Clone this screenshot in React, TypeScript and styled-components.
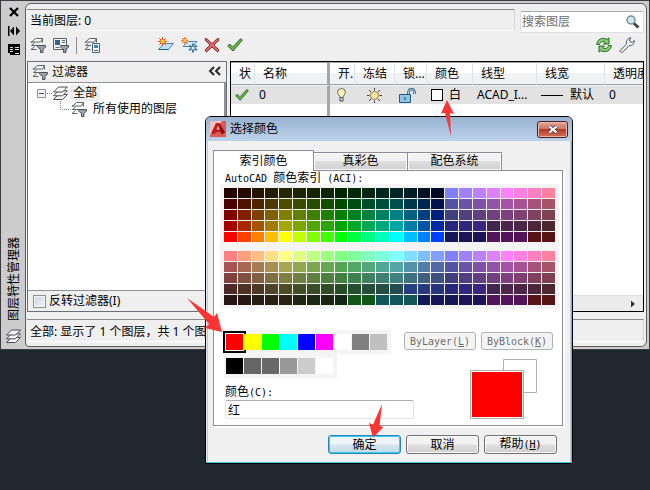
import React from "react";
import styled, { createGlobalStyle, css } from "styled-components";

const GlobalStyle = createGlobalStyle`
  * { box-sizing: border-box; }
  html, body { margin: 0; background: #20272f; }
  body {
    font-family: "Noto Sans", "Noto Sans CJK SC", sans-serif;
    font-size: 12px;
    line-height: 16px;
    color: #000;
    overflow: hidden;
  }
  button, input { font: inherit; color: inherit; margin: 0; padding: 0; }
`;

/* ---------- palette window ---------- */

const Desktop = styled.div`
  position: relative;
  min-height: 100vh;
`;

const Palette = styled.section`
  display: flex;
  padding: 2px 2px 2px 1px;
  background: #ccc;
  border: 1px solid #3c3b40;
`;

const SideBar = styled.div`
  width: 23px;
  flex: none;
  display: flex;
  flex-direction: column;
  align-items: center;
  gap: 7px;
  padding: 3px 0 0;
`;

const SideButton = styled.button`
  display: block;
  width: 14px;
  height: 12px;
  border: 0;
  background: none;
  svg { display: block; }
`;

const SideTitle = styled.h1`
  margin: auto 0 1px;
  font-size: 12px;
  font-weight: 400;
  line-height: 16px;
  writing-mode: vertical-rl;
  text-orientation: sideways;
  transform: rotate(180deg);
`;

const SideFoot = styled.span`
  display: block;
  height: 18px;
  svg { display: block; }
`;

const Client = styled.div`
  flex: 1;
  min-width: 0;
  display: flex;
  flex-direction: column;
  padding: 5px 2px 4px 1px;
  background: #efefef;
  border: 1px solid #5c5c60;
  border-radius: 6px 6px 6px 4px;
`;

const TopRow = styled.div`
  display: flex;
  align-items: flex-start;
  gap: 5px;
`;

const CurrentLayer = styled.div`
  flex: 1;
  height: 22px;
  padding: 3px 3px;
  border-top: 1px solid #8a8a8a;
  border-right: 1px solid #d4d4d4;
  border-bottom: 1px solid #fafafa;
`;

const SearchBox = styled.label`
  display: flex;
  align-items: center;
  width: 124px;
  height: 22px;
  margin-top: 2px;
  padding: 0 3px 0 1px;
  background: #fff;
  border: 1px solid #dcdfe4;
  border-top-color: #a8abb0;
  border-radius: 2px;
  input {
    flex: 1;
    min-width: 0;
    border: 0;
    outline: 0;
    background: none;
  }
  input::placeholder { color: #6d6d6d; opacity: 1; }
`;

const ToolBar = styled.div`
  display: flex;
  align-items: center;
  gap: 7px;
  height: 28px;
  padding: 0 9px 4px 3px;
`;

const ToolButton = styled.button`
  display: block;
  width: 16px;
  height: 16px;
  border: 0;
  background: none;
  svg { display: block; }
`;

const Separator = styled.span`
  width: 1px;
  height: 17px;
  background: #8c8c8c;
`;

const ToolGroup = styled.div<{ $push?: number; $end?: boolean }>`
  display: flex;
  align-items: center;
  gap: 7px;
  margin-left: ${(p) => (p.$end ? "auto" : `${p.$push ?? 0}px`)};
`;

const Panes = styled.div`
  display: grid;
  grid-template-columns: 200px 1fr;
  gap: 3px;
  height: 251px;
`;

const FilterPane = styled.div`
  display: flex;
  flex-direction: column;
  border: 1px solid #6c6f76;
  min-height: 0;
`;

const FilterHeader = styled.div`
  display: flex;
  align-items: center;
  gap: 4px;
  height: 21px;
  padding: 0 4px;
  border-bottom: 1px solid #8d9099;
  button { margin-left: auto; }
`;

const Tree = styled.ul`
  flex: 1;
  margin: 0;
  padding: 2px 8px;
  list-style: none;
  background: #fff;
  border-right: 2px solid #8d9099;
`;

const TreeItem = styled.li<{ $level: number }>`
  display: flex;
  align-items: center;
  height: 16px;
  padding-left: ${(p) => p.$level * 24}px;
  svg { flex: none; }
`;

const TreeLabel = styled.span<{ $selected?: boolean }>`
  padding: 0 3px;
  background: ${(p) => (p.$selected ? "#eee" : "transparent")};
`;

const InvertRow = styled.label`
  display: flex;
  align-items: center;
  gap: 3px;
  height: 21px;
  padding: 0 5px;
  border-top: 1px solid #8d9099;
  input {
    appearance: none;
    width: 13px;
    height: 13px;
    border: 1px solid #8e8f8f;
    background: linear-gradient(135deg, #cfd2d6, #f6f6f6);
    box-shadow: inset 0 0 0 1px #f4f4f4;
  }
`;

const ListPane = styled.div`
  display: flex;
  flex-direction: column;
  min-width: 0;
  overflow: hidden;
  border: 1px solid #000;
  background: #fff;
`;

const LayerTable = styled.table`
  table-layout: fixed;
  width: 100%;
  border-collapse: separate;
  border-spacing: 0;
  white-space: nowrap;
  th {
    height: 23px;
    padding: 0 0 0 8px;
    overflow: hidden;
    font-weight: 400;
    text-align: left;
    background: linear-gradient(#fff 50%, #f1f2f4 50%);
    border-right: 1px solid #dfe2e6;
    border-bottom: 1px solid #a0a0a0;
    border-top: 1px solid #a0a0a0;
  }
  td {
    height: 19px;
    padding: 0 0 0 4px;
    overflow: hidden;
    background: #e2e2e2;
    border-top: 1px solid #f2f2f2;
  }
  th:nth-child(2), td:nth-child(2) { border-right: 3px solid #a6a6a6; }
  th:last-child { border-right: 0; }
  svg { display: block; }
`;

const Cell = styled.span<{ $gap?: number }>`
  display: flex;
  align-items: center;
  gap: ${(p) => p.$gap ?? 7}px;
`;

const Center = styled.span`
  display: flex;
  justify-content: center;
  padding-right: 6px;
`;

const ColorChip = styled.span`
  width: 12px;
  height: 12px;
  border: 1px solid #000;
  background: #fff;
`;

const Dash = styled.span`
  width: 22px;
  height: 1px;
  background: #000;
`;

const ListBody = styled.div`
  flex: 1;
  display: flex;
`;

const ListDivider = styled.div`
  width: 99px;
  border-right: 3px solid #a6a6a6;
`;

const ScrollBar = styled.div`
  display: flex;
  justify-content: flex-end;
  align-items: center;
  height: 16px;
  padding-right: 6px;
  background: #ececec;
  border-top: 1px solid #ddd;
  button { height: 10px; width: 8px; border: 0; background: none; }
  svg { display: block; }
`;

const StatusBar = styled.div`
  margin-top: 7px;
  height: 23px;
  padding: 4px 3px;
  border-top: 1px solid #8a8a8a;
  border-right: 1px solid #d4d4d4;
  border-bottom: 1px solid #fff;
`;

/* ---------- colour dialog ---------- */

const Dialog = styled.section`
  position: absolute;
  left: 205px;
  top: 116px;
  width: 368px;
  background: #f0f0f0;
  border: 1px solid #000;
  border-radius: 6px 6px 0 0;
  box-shadow: inset -1px -1px 0 #45c4ee, inset 1px 1px 0 #dfe9f4, inset -2px 0 0 #b7cfe6, inset 2px 0 0 #b9cbe0;
  font-family: "DejaVu Sans Mono", "Noto Sans CJK SC", monospace;
`;

const TitleBar = styled.header`
  display: flex;
  align-items: center;
  height: 24px;
  padding: 0 4px;
  background: linear-gradient(#98b3d0, #bdd2ea);
  border-radius: 5px 5px 0 0;
  h2 {
    flex: 1;
    margin: 0 0 0 4px;
    font-size: 12px;
    font-weight: 400;
  }
`;

const CloseButton = styled.button`
  display: flex;
  align-items: center;
  justify-content: center;
  width: 31px;
  height: 17px;
  border: 1px solid #4c1d25;
  border-radius: 3px;
  background: linear-gradient(#e0a99b, #cf7567 45%, #b53a26 50%, #d2715a);
  box-shadow: inset 0 0 0 1px #e8b9ad;
`;

const Content = styled.div`
  padding: 9px 9px 9px 7px;
`;

const Tabs = styled.div`
  display: flex;
  align-items: flex-end;
`;

const tabOn = css`
  width: 101px;
  height: 21px;
  margin-bottom: -1px;
  background: #fff;
`;
const tabOff = css`
  width: 95px;
  height: 18px;
  margin-left: -1px;
  background: linear-gradient(#f2f2f2 45%, #dedede 50%, #d0d0d0);
  box-shadow: inset 0 0 0 1px #fbfbfb;
`;
const Tab = styled.button<{ $active?: boolean }>`
  border: 1px solid #8d8c98;
  border-bottom: 0;
  line-height: 17px;
  ${(p) => (p.$active ? tabOn : tabOff)}
`;

const TabPanel = styled.div`
  padding: 0 3px 5px 6px;
  background: #fff;
  border: 1px solid #8d8c98;
  box-shadow: 2px 2px 0 #fff;
`;

const Caption = styled.div`
  padding-left: 5px;
  height: 13px;
  line-height: 15px;
`;

const Latin = styled.span`
  font-size: 10px;
`;

const IndexBoard = styled.div`
  display: grid;
  gap: 9px;
  padding: 4px;
  background: #f4f4f4;
`;

const IndexGrid = styled.div`
  display: grid;
  grid-template-columns: repeat(24, 1fr);
  grid-auto-rows: 10px;
  gap: 1px;
`;

const Swatch = styled.button<{ $color: string }>`
  border: 0;
  min-width: 0;
  background: ${(p) => p.$color};
`;

const Standard = styled.div`
  display: flex;
  justify-content: space-between;
  align-items: flex-start;
  padding: 21px 6px 0 4px;
`;

const StandardRow = styled.div`
  display: flex;
  gap: 1px;
  width: max-content;
  padding: 4px 4px 4px 2px;
  background: #f4f4f4;
`;

const StandardSwatch = styled(Swatch)<{ $picked?: boolean }>`
  width: 17px;
  height: 16px;
  ${(p) => p.$picked && css`box-shadow: 0 0 0 1px #fff, 0 0 0 3px #000;`}
`;

const ByButtons = styled.div`
  display: flex;
  gap: 5px;
  padding-top: 2px;
`;

const ByButton = styled.button`
  width: 72px;
  height: 18px;
  font-size: 10px;
  line-height: 15px;
  color: #6d6d6d;
  background: #f4f4f4;
  border: 1px solid #adb2b5;
  border-radius: 3px;
`;

const LowerRow = styled.div`
  display: flex;
  justify-content: space-between;
  align-items: flex-start;
  padding: 0 22px 0 5px;
`;

const NameField = styled.label`
  display: block;
  width: 189px;
  padding-top: 7px;
  line-height: 14px;
  input {
    display: block;
    width: 100%;
    height: 19px;
    padding: 0 2px;
    background: #fff;
    border: 1px solid #e2e3ea;
    border-top-color: #abadb3;
    border-radius: 2px;
    outline: 0;
  }
`;

const Preview = styled.svg`
  display: block;
  margin-top: -19px;
`;

const Actions = styled.div`
  display: flex;
  justify-content: flex-end;
  gap: 5px;
  padding: 9px 6px 0 0;
`;

const ActionButton = styled.button<{ $primary?: boolean }>`
  width: 73px;
  height: 19px;
  line-height: 16px;
  border: 1px solid ${(p) => (p.$primary ? "#2c84b4" : "#707070")};
  border-radius: 3px;
  background: ${(p) =>
    p.$primary
      ? "linear-gradient(#edf5f9 48%, #d5e6ee 52%, #c3d9e4)"
      : "linear-gradient(#f2f2f2 48%, #dedede 52%, #cfcfcf)"};
  box-shadow: inset 0 0 0 1px ${(p) => (p.$primary ? "#33ccf4" : "#fbfbfb")};
`;

const Pointer = styled.svg<{ $x: number; $y: number }>`
  position: absolute;
  left: ${(p) => p.$x}px;
  top: ${(p) => p.$y}px;
  pointer-events: none;
  fill: #fc3434;
`;

/* ---------- icons ---------- */

const LayersIcon = () => (
  <svg width="18" height="15" viewBox="0 0 18 15" fill="#f5f5f5" stroke="#4a4e54" aria-hidden="true">
    <path d="M1.5 13.500l5-5h9l-5 5z" />
    <path d="M1.500 9.800l5-5h9l-5 5z" />
    <path d="M1.500 6l5-5h9l-5 5z" />
  </svg>
);

const Funnel = () => (
  <path d="M7.500 8.500h8v1.500l-2.500 2.500v3h-2.500v-3L7.500 10z" fill="#98a2ad" stroke="#4b535d" />
);

const SheetLines = () => (
  <g fill="none" stroke="#5d6268">
    <path d="M1 5.500l4.500-4h7l-2 3.500H1z" fill="#fafafa" />
    <path d="M7 8.500H1.500l3-2.500M6.500 12.500H1l3.500-3" />
    <path d="M12.500 1.500v4" />
  </g>
);

const FilterIcon = () => (
  <svg width="16" height="16" viewBox="0 0 16 16" aria-hidden="true">
    <SheetLines />
    <Funnel />
  </svg>
);

const GroupFilterIcon = () => (
  <svg width="16" height="16" viewBox="0 0 16 16" aria-hidden="true">
    <path d="M.5 1.500h13v11H.5z" fill="#f3f6f8" stroke="#55626e" />
    <path d="M2 3h5v5H2z" fill="#35618c" />
    <path d="M9 3.500h3M9 5.500h3M2.500 10.500h4" stroke="#55626e" />
    <Funnel />
  </svg>
);

const StatesIcon = () => (
  <svg width="16" height="16" viewBox="0 0 16 16" aria-hidden="true">
    <SheetLines />
    <path d="M8.500 6.500h7v9h-7z" fill="#f6fbff" stroke="#4b5f72" />
    <path d="M10 8h4v3h-4z" fill="#3d7fb4" />
    <path d="M10 13.500h4" stroke="#4b5f72" />
  </svg>
);

const Burst = () => (
  <g>
    <path d="M4.500 0v9M0 4.500h9M1.300 1.300l6.400 6.400M7.700 1.300L1.300 7.700" stroke="#d9461c" />
    <circle cx="4.500" cy="4.500" r="2.200" fill="#ffd23c" stroke="#e87a18" />
  </g>
);

const NewLayerIcon = () => (
  <svg width="16" height="16" viewBox="0 0 16 16" aria-hidden="true">
    <path d="M.5 12.500L6 6.500h9.500l-5 6z" fill="#bfe0f2" stroke="#4f83a3" />
    <path d="M1 12.500h9.500" stroke="#1f5d86" />
    <Burst />
  </svg>
);

const NewFrozenIcon = () => (
  <svg width="17" height="16" viewBox="0 0 17 16" aria-hidden="true">
    <path d="M2 9.500L7 4.500h9l-4 5z" fill="#d4eaf6" stroke="#4f83a3" />
    <g transform="scale(.8)"><Burst /></g>
    <path d="M12 6.500v9M8 8.700l8 4.500M16 8.700l-8 4.500" stroke="#3f78ab" strokeWidth="2" />
    <circle cx="12" cy="11" r="1.500" fill="#e8f5ff" />
  </svg>
);

const DeleteIcon = () => (
  <svg width="16" height="16" viewBox="0 0 16 16" aria-hidden="true">
    <path d="M2 1L8 6.500 14 1l1 2-5.200 5.200L15 13l-1.500 2L8 10l-5.500 5L1 13l5-5L1 3z" fill="#e06a6a" stroke="#802a30" />
  </svg>
);

const CheckIcon = () => (
  <svg width="16" height="14" viewBox="0 0 16 14" aria-hidden="true">
    <path d="M.7 8l2-2 3 3.200L13.500.8 15.300 2 6 13z" fill="#6fb54a" stroke="#226a1c" />
  </svg>
);

const RefreshIcon = () => (
  <svg width="16" height="16" viewBox="0 0 16 16" aria-hidden="true">
    <g fill="#8ecb76" stroke="#236d20">
      <path d="M.7 7.500C.8 3 6-.6 11 2.500L13 .8V7H7.500L9.300 5C6.500 3.600 4 5 3.500 7.500z" />
      <path d="M15.300 8.500C15.200 13 10 16.600 5 13.500l-2 1.700V9h5.500l-1.800 2c2.800 1.400 5.300 0 5.800-2.500z" />
    </g>
  </svg>
);

const WrenchIcon = () => (
  <svg width="16" height="16" viewBox="0 0 16 16" aria-hidden="true">
    <path d="M1 13.500l6.500-6.300C6.800 3.500 9 1 12 .8L10.600 3l.6 1.800 2 .5L15.300 3.500c.4 3-2 5.500-5.200 5.200L3.500 15.300c-1.200.7-3-.6-2.500-1.800z" fill="#eceef0" stroke="#50545a" />
  </svg>
);

const SearchIcon = () => (
  <svg width="14" height="14" viewBox="0 0 14 14" aria-hidden="true">
    <path d="M7.500 8l5 4.500" stroke="#3c444c" strokeWidth="3" />
    <circle cx="5" cy="5" r="4" fill="#cfe6ee" stroke="#7c8b96" strokeWidth="1.500" />
  </svg>
);

const BulbIcon = () => (
  <svg width="9" height="15" viewBox="0 0 9 15" aria-hidden="true">
    <path d="M3 9.500C3 7.500.6 6.500.6 4.200a3.900 3.700 0 0 1 7.800 0C8.400 6.500 6 7.500 6 9.500z" fill="#fdf6b8" stroke="#6b6a5a" />
    <path d="M3 9.500h3V13H3z" fill="#ddd" stroke="#4a4a4a" />
  </svg>
);

const SunIcon = () => (
  <svg width="15" height="15" viewBox="0 0 15 15" aria-hidden="true">
    <path d="M7.500 0v2.500M7.500 12.500V15M0 7.500h2.500M12.500 7.500H15M2 2l2 2M11 11l2 2M13 2l-2 2M4 11l-2 2" stroke="#3f3f3f" />
    <circle cx="7.500" cy="7.500" r="4" fill="#fbe8a0" stroke="#8f7a3c" />
  </svg>
);

const LockIcon = () => (
  <svg width="17" height="15" viewBox="0 0 17 15" aria-hidden="true">
    <path d="M9.500 7V4a3 3 0 0 1 6 0v2" fill="none" stroke="#2c5878" strokeWidth="2.500" />
    <path d="M9.500 7V4a3 3 0 0 1 6 0v2" fill="none" stroke="#a9d5ee" />
    <path d="M.5 6.500h11v8H.5z" fill="#8fc6e6" stroke="#255a80" />
    <path d="M6 9v3" stroke="#17354c" />
  </svg>
);

const AppLogo = () => (
  <svg width="16" height="16" viewBox="0 0 16 16" aria-hidden="true">
    <path d="M0 0h16v16H0z" fill="#dd5a54" />
    <path d="M0 0h12L0 14z" fill="#f3c4bf" />
    <path d="M1 12.500L6 2h3.500l2 9H6.500l-2 2z" fill="#c01a20" />
    <path d="M6.500 8.500L8 5l1.500 3.500z" fill="#f5c6c2" />
    <path d="M9.500 2l5.500 9.500-3.500 2z" fill="#7d0a12" />
  </svg>
);

const Expander = () => (
  <svg width="16" height="16" viewBox="0 0 16 16" aria-hidden="true">
    <path d="M1.500 4.500h8v8h-8z" fill="#f4f4f4" stroke="#919191" />
    <path d="M3 8.500h5" stroke="#2f55a4" />
    <path d="M11 8.500h5" stroke="#777" strokeDasharray="1 1" />
  </svg>
);

const Branch = () => (
  <svg width="11" height="16" viewBox="0 0 11 16" aria-hidden="true">
    <path d="M.5 0v8.500h10" fill="none" stroke="#777" strokeDasharray="1 1" />
  </svg>
);

/* ---------- data ---------- */

const COLUMNS: { label: string; width?: number }[] = [
  { label: "状", width: 24 },
  { label: "名称", width: 75 },
  { label: "开.", width: 25 },
  { label: "冻结", width: 40 },
  { label: "锁...", width: 32 },
  { label: "颜色", width: 46 },
  { label: "线型", width: 64 },
  { label: "线宽", width: 68 },
  { label: "透明度" },
];

const LEVELS = [1, 0.65, 0.5, 0.3, 0.15];

function hueColor(index: number, level: number, pastel: boolean): string {
  const step = index / 4;
  const channel = (n: number) => {
    const k = (n + step) % 6;
    const full = 1 - Math.max(0, Math.min(k, 4 - k, 1));
    const value = pastel ? 0.5 + full / 2 : full;
    return Math.round(value * level * 255);
  };
  return `rgb(${channel(5)}, ${channel(3)}, ${channel(1)})`;
}

const DIM: Record<number, string> = {
  13: "#26407f", 14: "#263a80", 15: "#26337f", 16: "#26267f", 17: "#2f267f", 18: "#3a267f",
};

function pastelColor(index: number, row: number): string {
  if (row === 3 && DIM[index]) return DIM[index];
  if (row === 4) {
    if (index >= 22) return "#581316";
    if (index >= 19) return "#551358";
    if (index >= 17) return "#1c1358";
    if (index >= 14) return "#131758";
    if (index >= 11) return "#135558";
    if (index >= 9) return "#135518";
  }
  return hueColor(index, LEVELS[row], true);
}

const columns = Array.from({ length: 24 }, (_, i) => i);
const rows = [0, 1, 2, 3, 4];

const vivid = rows.flatMap((r) =>
  columns.map((c) => (c < 16 ? hueColor(c, LEVELS[4 - r], false) : pastelColor(c, r)))
);
const soft = rows.flatMap((r) => columns.map((c) => pastelColor(c, r)));

const STANDARD = ["#f00", "#ff0", "#0f0", "#0ff", "#00f", "#f0f", "#fff", "#808080", "#c0c0c0"];
const GRAYS = ["#000", "#666", "#686868", "#999", "#ccc", "#fff"];

/* ---------- views ---------- */

function LayerPalette() {
  return (
    <Palette aria-label="图层特性管理器">
      <SideBar>
        <SideButton aria-label="关闭">
          <svg width="14" height="12" viewBox="0 0 14 12"><path d="M3 2l8 8M11 2l-8 8" stroke="#000" strokeWidth="2.200" /></svg>
        </SideButton>
        <SideButton aria-label="自动隐藏">
          <svg width="14" height="12" viewBox="0 0 14 12"><path d="M1 1h1.500v10H1zM7 1.500v9L3 6zM9 1.500v9L13 6z" /></svg>
        </SideButton>
        <SideButton aria-label="特性">
          <svg width="14" height="12" viewBox="0 0 14 12">
            <path d="M1 0h12v11H3V9H1z" />
            <path d="M8 3.500h4M8 5.500h4M3 3.500h3M3 5.500h3M3 7.500h3M8 9.500h4" stroke="#ddd" />
          </svg>
        </SideButton>
        <SideTitle>图层特性管理器</SideTitle>
        <SideFoot><LayersIcon /></SideFoot>
      </SideBar>
      <Client>
        <TopRow>
          <CurrentLayer>当前图层: 0</CurrentLayer>
          <SearchBox>
            <input type="text" placeholder="搜索图层" aria-label="搜索图层" />
            <SearchIcon />
          </SearchBox>
        </TopRow>
        <ToolBar>
          <ToolButton aria-label="新建特性过滤器"><FilterIcon /></ToolButton>
          <ToolButton aria-label="新建组过滤器"><GroupFilterIcon /></ToolButton>
          <Separator />
          <ToolButton aria-label="图层状态管理器"><StatesIcon /></ToolButton>
          <ToolGroup $push={51}>
            <ToolButton aria-label="新建图层"><NewLayerIcon /></ToolButton>
            <ToolButton aria-label="新建冻结图层"><NewFrozenIcon /></ToolButton>
            <ToolButton aria-label="删除图层"><DeleteIcon /></ToolButton>
            <ToolButton aria-label="置为当前"><CheckIcon /></ToolButton>
          </ToolGroup>
          <ToolGroup $end>
            <ToolButton aria-label="刷新"><RefreshIcon /></ToolButton>
            <ToolButton aria-label="设置"><WrenchIcon /></ToolButton>
          </ToolGroup>
        </ToolBar>
        <Panes>
          <FilterPane>
            <FilterHeader>
              <FilterIcon />
              过滤器
              <ToolButton aria-label="收拢">
                <svg width="16" height="16" viewBox="0 0 16 16"><path d="M8 3L4 7l4 4M14 3l-4 4 4 4" fill="none" stroke="#26282c" strokeWidth="2" /></svg>
              </ToolButton>
            </FilterHeader>
            <Tree>
              <TreeItem $level={0}>
                <Expander />
                <LayersIcon />
                <TreeLabel $selected>全部</TreeLabel>
              </TreeItem>
              <TreeItem $level={1}>
                <Branch />
                <FilterIcon />
                <TreeLabel>&nbsp;所有使用的图层</TreeLabel>
              </TreeItem>
            </Tree>
            <InvertRow>
              <input type="checkbox" />
              反转过滤器(I)
            </InvertRow>
          </FilterPane>
          <ListPane>
            <LayerTable>
              <colgroup>
                {COLUMNS.map((c) => (
                  <col key={c.label} width={c.width} />
                ))}
              </colgroup>
              <thead>
                <tr>{COLUMNS.map((c) => <th key={c.label}>{c.label}</th>)}</tr>
              </thead>
              <tbody>
                <tr>
                  <td><Center><CheckIcon /></Center></td>
                  <td>0</td>
                  <td><Center><BulbIcon /></Center></td>
                  <td><Center><SunIcon /></Center></td>
                  <td><Cell><LockIcon /></Cell></td>
                  <td><Cell $gap={6}><ColorChip />白</Cell></td>
                  <td>ACAD_I...</td>
                  <td><Cell><Dash />默认</Cell></td>
                  <td>0</td>
                </tr>
              </tbody>
            </LayerTable>
            <ListBody><ListDivider /></ListBody>
            <ScrollBar>
              <button aria-label="向右滚动">
                <svg width="8" height="10" viewBox="0 0 8 10"><path d="M2 1.500L6 5 2 8.500z" fill="#333" /></svg>
              </button>
            </ScrollBar>
          </ListPane>
        </Panes>
        <StatusBar>全部: 显示了 1 个图层，共 1 个图层</StatusBar>
      </Client>
    </Palette>
  );
}

function ColorDialog() {
  return (
    <Dialog role="dialog" aria-label="选择颜色">
      <TitleBar>
        <AppLogo />
        <h2>选择颜色</h2>
        <CloseButton aria-label="关闭">
          <svg width="12" height="9" viewBox="0 0 12 9">
            <path d="M2.500 1.500l7 6M9.500 1.500l-7 6" stroke="#5b4a52" strokeWidth="4" />
            <path d="M2.500 1.500l7 6M9.500 1.500l-7 6" stroke="#fff" strokeWidth="2.200" />
          </svg>
        </CloseButton>
      </TitleBar>
      <Content>
        <Tabs role="tablist">
          <Tab role="tab" aria-selected $active>索引颜色</Tab>
          <Tab role="tab">真彩色</Tab>
          <Tab role="tab">配色系统</Tab>
        </Tabs>
        <TabPanel role="tabpanel">
          <Caption>
            <Latin>AutoCAD </Latin>颜色索引<Latin> (ACI):</Latin>
          </Caption>
          <IndexBoard>
            <IndexGrid>
              {vivid.map((c, i) => <Swatch key={i} $color={c} aria-label={c} />)}
            </IndexGrid>
            <IndexGrid>
              {soft.map((c, i) => <Swatch key={i} $color={c} aria-label={c} />)}
            </IndexGrid>
          </IndexBoard>
          <Standard>
            <div>
              <StandardRow>
                {STANDARD.map((c, i) => <StandardSwatch key={c} $color={c} $picked={i === 0} aria-label={c} />)}
              </StandardRow>
              <StandardRow>
                {GRAYS.map((c) => <StandardSwatch key={c} $color={c} aria-label={c} />)}
              </StandardRow>
            </div>
            <ByButtons>
              <ByButton disabled>ByLayer(<u>L</u>)</ByButton>
              <ByButton disabled>ByBlock(<u>K</u>)</ByButton>
            </ByButtons>
          </Standard>
          <LowerRow>
            <NameField>
              颜色<Latin>(C):</Latin>
              <input type="text" defaultValue="红" />
            </NameField>
            <Preview width="67" height="61" viewBox="0 0 67 61" aria-hidden="true">
              <path d="M33.500 .5h33v33h-33z" fill="#fff" stroke="#adadad" />
              <path d="M.5 11.500h53v48H.5z" fill="#fff" stroke="#adadad" />
              <path d="M2 13h50v45H2z" fill="#f00" />
            </Preview>
          </LowerRow>
        </TabPanel>
        <Actions>
          <ActionButton $primary>确定</ActionButton>
          <ActionButton>取消</ActionButton>
          <ActionButton>帮助<Latin>(<u>H</u>)</Latin></ActionButton>
        </Actions>
      </Content>
    </Dialog>
  );
}

export default function App() {
  return (
    <>
      <GlobalStyle />
      <Desktop>
        <LayerPalette />
        <ColorDialog />
        <Pointer $x={440} $y={100} width="15" height="37" viewBox="0 0 15 37" aria-hidden="true">
          <path d="M7 0l7 14-4-1 1 23.500L5 13l-4 .5z" />
        </Pointer>
        <Pointer $x={187} $y={297} width="36" height="36" viewBox="0 0 36 36" aria-hidden="true">
          <path d="M35 35L18 31l4-4L0 1l27 19 3-4z" />
        </Pointer>
        <Pointer $x={368} $y={403} width="16" height="35" viewBox="0 0 16 35" aria-hidden="true">
          <path d="M5 34.500L1 20l4 1.500L14 1l-2.500 22 4 1z" />
        </Pointer>
      </Desktop>
    </>
  );
}
